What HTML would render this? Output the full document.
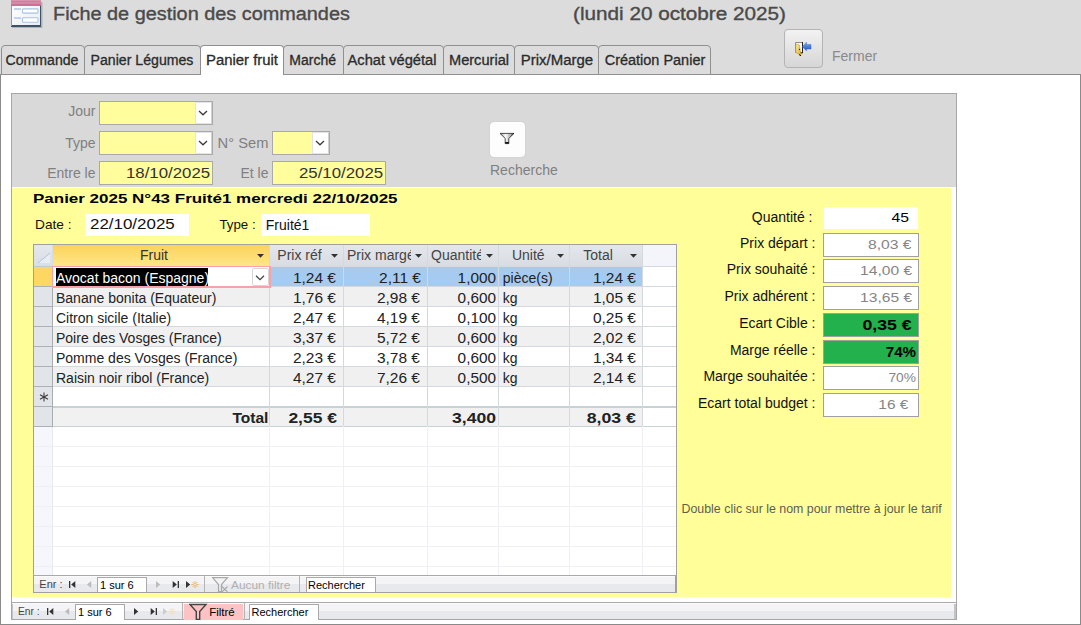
<!DOCTYPE html>
<html><head><meta charset="utf-8"><title>Fiche de gestion des commandes</title>
<style>
html,body{margin:0;padding:0;}
body{width:1081px;height:625px;overflow:hidden;position:relative;font-family:"Liberation Sans", sans-serif;background:#fff;}
</style></head><body>
<div style="position:absolute;left:0px;top:0px;width:1081px;height:74px;background:#dcdcdc;"></div>
<div style="position:absolute;left:0px;top:74px;width:1081px;height:551px;background:#fff;"></div>
<div style="position:absolute;left:0px;top:74px;width:1081px;height:1px;background:#8a8a8a;"></div>
<div style="position:absolute;left:0px;top:74px;width:1px;height:551px;background:#8a8a8a;"></div>
<div style="position:absolute;left:1080px;top:74px;width:1px;height:551px;background:#8a8a8a;"></div>
<div style="position:absolute;left:0px;top:624px;width:1081px;height:1px;background:#8a8a8a;"></div>
<svg style="position:absolute;left:11px;top:0px" width="32" height="29" viewBox="0 0 32 29">
<defs><linearGradient id="ig" x1="0" y1="0" x2="1" y2="1"><stop offset="0" stop-color="#ffffff"/><stop offset="1" stop-color="#e8ecf4"/></linearGradient>
<linearGradient id="pg" x1="0" y1="0" x2="0" y2="1"><stop offset="0" stop-color="#d898b0"/><stop offset="1" stop-color="#d47c9c"/></linearGradient></defs>
<rect x="1" y="2" width="30.5" height="26" fill="#56677a" opacity="0.35"/>
<rect x="0" y="0" width="30" height="27" fill="#3e5368"/>
<rect x="0" y="0" width="1" height="26" fill="#8c9db0"/>
<rect x="1" y="5.5" width="28" height="19.5" fill="url(#ig)"/>
<rect x="0" y="0" width="30" height="5.5" fill="url(#pg)"/>
<rect x="0" y="1" width="30" height="0.8" fill="#c8708f" opacity="0.7"/>
<rect x="0" y="4.6" width="30" height="0.9" fill="#c45c82"/>
<rect x="3" y="8.2" width="7" height="1.6" fill="#b4c8e4"/>
<rect x="3" y="17.3" width="7" height="1.5" fill="#b4c8e4"/>
<rect x="11.5" y="8.9" width="15.5" height="4.2" rx="0.8" fill="#fff" stroke="#aac2e2" stroke-width="1.1"/>
<rect x="11.5" y="17.8" width="15.5" height="4.4" rx="0.8" fill="#fff" stroke="#aac2e2" stroke-width="1.1"/>
</svg>
<div style="position:absolute;left:53px;top:5.05px;font-size:18px;line-height:18px;white-space:nowrap;color:#4a4a4a;-webkit-text-stroke:0.0px currentColor;transform:scaleX(1.103);transform-origin:0 0;-webkit-text-stroke:0.35px #4a4a4a;">Fiche de gestion des commandes</div>
<div style="position:absolute;left:573px;top:4.75px;font-size:18px;line-height:18px;white-space:nowrap;color:#4a4a4a;-webkit-text-stroke:0.0px currentColor;transform:scaleX(1.15);transform-origin:0 0;-webkit-text-stroke:0.35px #4a4a4a;">(lundi 20 octobre 2025)</div>
<div style="position:absolute;left:1px;top:45px;width:82px;height:28px;background:#dcdcdc;border:1px solid #8f8f8f;border-radius:4px 4px 0 0;"></div>
<div style="position:absolute;left:-257.6px;width:600px;text-align:center;top:52.84px;font-size:14px;line-height:14px;white-space:nowrap;color:#2b2b2b;-webkit-text-stroke:0.0px currentColor;transform:scaleX(1.007);transform-origin:50% 0;-webkit-text-stroke:0.3px #2b2b2b;">Commande</div>
<div style="position:absolute;left:84px;top:45px;width:115px;height:28px;background:#dcdcdc;border:1px solid #8f8f8f;border-radius:4px 4px 0 0;"></div>
<div style="position:absolute;left:-157.8px;width:600px;text-align:center;top:52.84px;font-size:14px;line-height:14px;white-space:nowrap;color:#2b2b2b;-webkit-text-stroke:0.0px currentColor;transform:scaleX(1.009);transform-origin:50% 0;-webkit-text-stroke:0.3px #2b2b2b;">Panier Légumes</div>
<div style="position:absolute;left:200px;top:45px;width:82px;height:29px;background:#ffffff;border:1px solid #8f8f8f;border-bottom:none;border-radius:4px 4px 0 0;"></div>
<div style="position:absolute;left:-58.19999999999999px;width:600px;text-align:center;top:52.84px;font-size:14px;line-height:14px;white-space:nowrap;color:#2b2b2b;-webkit-text-stroke:0.0px currentColor;transform:scaleX(1.064);transform-origin:50% 0;-webkit-text-stroke:0.3px #2b2b2b;">Panier fruit</div>
<div style="position:absolute;left:283px;top:45px;width:59px;height:28px;background:#dcdcdc;border:1px solid #8f8f8f;border-radius:4px 4px 0 0;"></div>
<div style="position:absolute;left:12.649999999999977px;width:600px;text-align:center;top:52.84px;font-size:14px;line-height:14px;white-space:nowrap;color:#2b2b2b;-webkit-text-stroke:0.0px currentColor;-webkit-text-stroke:0.3px #2b2b2b;">Marché</div>
<div style="position:absolute;left:343px;top:45px;width:99px;height:28px;background:#dcdcdc;border:1px solid #8f8f8f;border-radius:4px 4px 0 0;"></div>
<div style="position:absolute;left:92.25px;width:600px;text-align:center;top:52.84px;font-size:14px;line-height:14px;white-space:nowrap;color:#2b2b2b;-webkit-text-stroke:0.0px currentColor;transform:scaleX(1.048);transform-origin:50% 0;-webkit-text-stroke:0.3px #2b2b2b;">Achat végétal</div>
<div style="position:absolute;left:443px;top:45px;width:70px;height:28px;background:#dcdcdc;border:1px solid #8f8f8f;border-radius:4px 4px 0 0;"></div>
<div style="position:absolute;left:178.5px;width:600px;text-align:center;top:52.84px;font-size:14px;line-height:14px;white-space:nowrap;color:#2b2b2b;-webkit-text-stroke:0.0px currentColor;transform:scaleX(1.043);transform-origin:50% 0;-webkit-text-stroke:0.3px #2b2b2b;">Mercurial</div>
<div style="position:absolute;left:514px;top:45px;width:83px;height:28px;background:#dcdcdc;border:1px solid #8f8f8f;border-radius:4px 4px 0 0;"></div>
<div style="position:absolute;left:256.85px;width:600px;text-align:center;top:52.84px;font-size:14px;line-height:14px;white-space:nowrap;color:#2b2b2b;-webkit-text-stroke:0.0px currentColor;transform:scaleX(1.069);transform-origin:50% 0;-webkit-text-stroke:0.3px #2b2b2b;">Prix/Marge</div>
<div style="position:absolute;left:598px;top:45px;width:111px;height:28px;background:#dcdcdc;border:1px solid #8f8f8f;border-radius:4px 4px 0 0;"></div>
<div style="position:absolute;left:355.0px;width:600px;text-align:center;top:52.84px;font-size:14px;line-height:14px;white-space:nowrap;color:#2b2b2b;-webkit-text-stroke:0.0px currentColor;transform:scaleX(1.033);transform-origin:50% 0;-webkit-text-stroke:0.3px #2b2b2b;">Création Panier</div>
<div style="position:absolute;left:784px;top:29px;width:37px;height:37px;border:1px solid #b4b4b4;border-radius:4px;background:linear-gradient(#f2f2f2,#d6d6d6);"></div>
<svg style="position:absolute;left:790px;top:38px" width="26" height="20" viewBox="0 0 26 20">
<defs><linearGradient id="ag" x1="0" y1="0" x2="0" y2="1"><stop offset="0" stop-color="#7fb0f8"/><stop offset="1" stop-color="#1d4fc4"/></linearGradient>
<linearGradient id="dg" x1="0" y1="0" x2="1" y2="1"><stop offset="0" stop-color="#fff0a0"/><stop offset="1" stop-color="#e0a820"/></linearGradient></defs>
<path d="M5.5 4.5 L12.5 4.5 L12.5 14.5 L5.5 14.5 Z" fill="#fbfbfb" stroke="#9a8c70" stroke-width="1"/>
<path d="M12.5 4 L12.5 15 L10.5 15" fill="none" stroke="#222" stroke-width="1"/>
<path d="M5.8 6 L9.5 7 L11 17.5 L5.8 14.5 Z" fill="url(#dg)" stroke="#b08a30" stroke-width="0.5"/>
<path d="M9 16.5 L11 17.8" stroke="#111" stroke-width="1"/>
<circle cx="9.4" cy="11.4" r="0.6" fill="#222"/>
<path d="M12.3 8.7 L16.5 4.2 L16.5 6.6 L21 6.6 L21 11 L16.5 11 L16.5 12.8 Z" fill="url(#ag)" stroke="#2a5ac0" stroke-width="0.4"/>
</svg>
<div style="position:absolute;left:832px;top:49.34px;font-size:14px;line-height:14px;white-space:nowrap;color:#8a8a8a;-webkit-text-stroke:0.0px currentColor;">Fermer</div>
<div style="position:absolute;left:11px;top:93px;width:946px;height:95px;background:#d9d9d9;box-sizing:border-box;border:1px solid #a6a6a6;border-bottom:none;"></div>
<div style="position:absolute;left:12px;top:187px;width:944px;height:1px;background:#fff;"></div>
<div style="position:absolute;right:985.5px;text-align:right;top:104.34px;font-size:14px;line-height:14px;white-space:nowrap;color:#808080;-webkit-text-stroke:0.0px currentColor;">Jour</div>
<div style="position:absolute;left:99px;top:101px;width:114px;height:24px;box-sizing:border-box;border:1px solid #a9a9a9;background:#fffd9c;"></div>
<div style="position:absolute;left:195px;top:102px;width:17px;height:22px;background:#fff;border:1px solid #e4e4e4;border-right-color:#d0d0d0;box-sizing:border-box"></div>
<svg style="position:absolute;left:198px;top:110.2px" width="10" height="6" viewBox="0 0 10 6"><path d="M1 1 L5 4.8 L9 1" fill="none" stroke="#3a3a3a" stroke-width="1.25"/></svg>
<div style="position:absolute;right:985.5px;text-align:right;top:135.64px;font-size:14px;line-height:14px;white-space:nowrap;color:#808080;-webkit-text-stroke:0.0px currentColor;">Type</div>
<div style="position:absolute;left:99px;top:131px;width:114px;height:24px;box-sizing:border-box;border:1px solid #a9a9a9;background:#fffd9c;"></div>
<div style="position:absolute;left:195px;top:132px;width:17px;height:22px;background:#fff;border:1px solid #e4e4e4;border-right-color:#d0d0d0;box-sizing:border-box"></div>
<svg style="position:absolute;left:198px;top:140.2px" width="10" height="6" viewBox="0 0 10 6"><path d="M1 1 L5 4.8 L9 1" fill="none" stroke="#3a3a3a" stroke-width="1.25"/></svg>
<div style="position:absolute;right:812.5px;text-align:right;top:135.64px;font-size:14px;line-height:14px;white-space:nowrap;color:#808080;-webkit-text-stroke:0.0px currentColor;transform:scaleX(1.05);transform-origin:100% 0;">N° Sem</div>
<div style="position:absolute;left:272px;top:131px;width:58px;height:24px;box-sizing:border-box;border:1px solid #a9a9a9;background:#fffd9c;"></div>
<div style="position:absolute;left:312px;top:132px;width:17px;height:22px;background:#fff;border:1px solid #e4e4e4;border-right-color:#d0d0d0;box-sizing:border-box"></div>
<svg style="position:absolute;left:315px;top:140.2px" width="10" height="6" viewBox="0 0 10 6"><path d="M1 1 L5 4.8 L9 1" fill="none" stroke="#3a3a3a" stroke-width="1.25"/></svg>
<div style="position:absolute;right:985.5px;text-align:right;top:165.64px;font-size:14px;line-height:14px;white-space:nowrap;color:#808080;-webkit-text-stroke:0.0px currentColor;">Entre le</div>
<div style="position:absolute;left:99px;top:161px;width:114px;height:24px;box-sizing:border-box;border:1px solid #a9a9a9;background:#fffd9c;"></div>
<div style="position:absolute;right:871px;text-align:right;top:165.64px;font-size:14px;line-height:14px;white-space:nowrap;color:#333;-webkit-text-stroke:0.0px currentColor;transform:scaleX(1.2);transform-origin:100% 0;">18/10/2025</div>
<div style="position:absolute;right:812.5px;text-align:right;top:165.64px;font-size:14px;line-height:14px;white-space:nowrap;color:#808080;-webkit-text-stroke:0.0px currentColor;">Et le</div>
<div style="position:absolute;left:272px;top:161px;width:114px;height:24px;box-sizing:border-box;border:1px solid #a9a9a9;background:#fffd9c;"></div>
<div style="position:absolute;right:698px;text-align:right;top:165.64px;font-size:14px;line-height:14px;white-space:nowrap;color:#333;-webkit-text-stroke:0.0px currentColor;transform:scaleX(1.2);transform-origin:100% 0;">25/10/2025</div>
<div style="position:absolute;left:490px;top:122px;width:35px;height:35px;border-radius:4px;background:#fdfdfd;box-shadow:0 0 1px #aaa;"></div>
<svg style="position:absolute;left:499px;top:132px" width="16" height="13" viewBox="0 0 16 13">
<defs><linearGradient id="fg" x1="0" x2="1"><stop offset="0" stop-color="#9a9a9a"/><stop offset="0.4" stop-color="#fafafa"/><stop offset="0.75" stop-color="#b0b0b0"/><stop offset="1" stop-color="#222"/></linearGradient></defs>
<path d="M1 1.4 L15 1.4 L9.8 6.4 L9.8 11.6 L6.2 11.6 L6.2 6.4 Z" fill="url(#fg)" stroke="#1a1a1a" stroke-width="0.75" stroke-linejoin="miter"/>
<path d="M6.2 10 L9.8 10 L9.8 11.6 L6.2 11.6 Z" fill="#111"/>
</svg>
<div style="position:absolute;left:490px;top:163.24px;font-size:14px;line-height:14px;white-space:nowrap;color:#808080;-webkit-text-stroke:0.0px currentColor;">Recherche</div>
<div style="position:absolute;left:11px;top:188px;width:1px;height:432px;background:#a6a6a6;"></div>
<div style="position:absolute;left:956px;top:93px;width:1px;height:527px;background:#a6a6a6;"></div>
<div style="position:absolute;left:12px;top:188px;width:939px;height:409px;background:#fffe99;"></div>
<div style="position:absolute;left:33px;top:191.52px;font-size:13.2px;line-height:13.2px;white-space:nowrap;color:#000;font-weight:bold;transform:scaleX(1.2875);transform-origin:0 0;">Panier 2025 N°43 Fruité1 mercredi 22/10/2025</div>
<div style="position:absolute;left:34.7px;top:217.53px;font-size:13.3px;line-height:13.3px;white-space:nowrap;color:#111;-webkit-text-stroke:0.0px currentColor;transform:scaleX(1.03);transform-origin:0 0;">Date :</div>
<div style="position:absolute;left:85px;top:214px;width:104px;height:22px;background:#fff;"></div>
<div style="position:absolute;left:89.7px;top:218.11px;font-size:13.8px;line-height:13.8px;white-space:nowrap;color:#111;-webkit-text-stroke:0.0px currentColor;transform:scaleX(1.227);transform-origin:0 0;">22/10/2025</div>
<div style="position:absolute;left:219.4px;top:217.53px;font-size:13.3px;line-height:13.3px;white-space:nowrap;color:#111;-webkit-text-stroke:0.0px currentColor;">Type :</div>
<div style="position:absolute;left:261px;top:214px;width:109px;height:22px;background:#fff;"></div>
<div style="position:absolute;left:265.8px;top:217.94px;font-size:14px;line-height:14px;white-space:nowrap;color:#111;-webkit-text-stroke:0.0px currentColor;">Fruité1</div>
<div style="position:absolute;left:33px;top:244px;width:644px;height:349px;background:#fff;box-sizing:border-box;border:1px solid #a0a0a0;"></div>
<div style="position:absolute;left:34px;top:245px;width:18px;height:21px;background:linear-gradient(#e4e7ec,#dadee5);"></div>
<div style="position:absolute;left:53px;top:245px;width:216px;height:21px;background:linear-gradient(#fcd35a,#fde68a);"></div>
<div style="position:absolute;left:269px;top:245px;width:373px;height:21px;background:linear-gradient(#e3e6eb,#d9dde3);"></div>
<div style="position:absolute;left:642px;top:245px;width:34px;height:21px;background:#f3f5fa;"></div>
<svg style="position:absolute;left:37px;top:251.5px" width="14" height="12" viewBox="0 0 14 12"><path d="M1 11 L13 1 L13 11 Z" fill="#e9ecf1"/><path d="M1 11 L13 1" stroke="#a8c4e8" stroke-width="1"/></svg>
<div style="position:absolute;left:34px;top:266px;width:18px;height:160px;background:#e1e4e9;"></div>
<div style="position:absolute;left:34px;top:426px;width:18px;height:149px;background:#f5f7fc;"></div>
<div style="position:absolute;left:34px;top:267px;width:18px;height:19px;background:#fdd663;"></div>
<div style="position:absolute;left:53px;top:267px;width:589px;height:19px;background:#ffffff;"></div>
<div style="position:absolute;left:53px;top:287px;width:589px;height:19px;background:#f0f0f0;"></div>
<div style="position:absolute;left:53px;top:307px;width:589px;height:19px;background:#ffffff;"></div>
<div style="position:absolute;left:53px;top:327px;width:589px;height:19px;background:#f0f0f0;"></div>
<div style="position:absolute;left:53px;top:347px;width:589px;height:19px;background:#ffffff;"></div>
<div style="position:absolute;left:53px;top:367px;width:589px;height:19px;background:#f0f0f0;"></div>
<div style="position:absolute;left:53px;top:387px;width:589px;height:19px;background:#ffffff;"></div>
<div style="position:absolute;left:53px;top:407px;width:589px;height:19px;background:#f1f1f1;"></div>
<div style="position:absolute;left:269px;top:267px;width:373px;height:19px;background:#a6cbf0;"></div>
<div style="position:absolute;left:52px;top:266px;width:624px;height:1px;background:#d3d9df;"></div>
<div style="position:absolute;left:52px;top:286px;width:624px;height:1px;background:#d3d9df;"></div>
<div style="position:absolute;left:52px;top:306px;width:624px;height:1px;background:#d3d9df;"></div>
<div style="position:absolute;left:52px;top:326px;width:624px;height:1px;background:#d3d9df;"></div>
<div style="position:absolute;left:52px;top:346px;width:624px;height:1px;background:#d3d9df;"></div>
<div style="position:absolute;left:52px;top:366px;width:624px;height:1px;background:#d3d9df;"></div>
<div style="position:absolute;left:52px;top:386px;width:624px;height:1px;background:#d3d9df;"></div>
<div style="position:absolute;left:52px;top:406px;width:624px;height:1px;background:#d3d9df;"></div>
<div style="position:absolute;left:52px;top:426px;width:624px;height:1px;background:#d3d9df;"></div>
<div style="position:absolute;left:34px;top:266px;width:18px;height:1px;background:#c4c8ce;"></div>
<div style="position:absolute;left:34px;top:286px;width:18px;height:1px;background:#adb1b6;"></div>
<div style="position:absolute;left:34px;top:306px;width:18px;height:1px;background:#adb1b6;"></div>
<div style="position:absolute;left:34px;top:326px;width:18px;height:1px;background:#adb1b6;"></div>
<div style="position:absolute;left:34px;top:346px;width:18px;height:1px;background:#adb1b6;"></div>
<div style="position:absolute;left:34px;top:366px;width:18px;height:1px;background:#adb1b6;"></div>
<div style="position:absolute;left:34px;top:386px;width:18px;height:1px;background:#adb1b6;"></div>
<div style="position:absolute;left:34px;top:406px;width:18px;height:1px;background:#adb1b6;"></div>
<div style="position:absolute;left:34px;top:426px;width:18px;height:1px;background:#adb1b6;"></div>
<div style="position:absolute;left:52px;top:406px;width:624px;height:2px;background:#c8d2d4;"></div>
<div style="position:absolute;left:52px;top:426px;width:624px;height:1px;background:#c8d2d4;"></div>
<div style="position:absolute;left:34px;top:446px;width:642px;height:1px;background:#eef0f3;"></div>
<div style="position:absolute;left:34px;top:466px;width:642px;height:1px;background:#eef0f3;"></div>
<div style="position:absolute;left:34px;top:486px;width:642px;height:1px;background:#eef0f3;"></div>
<div style="position:absolute;left:34px;top:506px;width:642px;height:1px;background:#eef0f3;"></div>
<div style="position:absolute;left:34px;top:526px;width:642px;height:1px;background:#eef0f3;"></div>
<div style="position:absolute;left:34px;top:546px;width:642px;height:1px;background:#eef0f3;"></div>
<div style="position:absolute;left:34px;top:566px;width:642px;height:1px;background:#eef0f3;"></div>
<div style="position:absolute;left:52px;top:245px;width:1px;height:21px;background:#d9dde3;"></div>
<div style="position:absolute;left:52px;top:286px;width:1px;height:141px;background:#a9adb2;"></div>
<div style="position:absolute;left:52px;top:427px;width:1px;height:148px;background:#e6e9ee;"></div>
<div style="position:absolute;left:269px;top:245px;width:1px;height:181px;background:#d3d9df;"></div>
<div style="position:absolute;left:269px;top:426px;width:1px;height:149px;background:#eef0f3;"></div>
<div style="position:absolute;left:343px;top:245px;width:1px;height:181px;background:#d3d9df;"></div>
<div style="position:absolute;left:343px;top:426px;width:1px;height:149px;background:#eef0f3;"></div>
<div style="position:absolute;left:427px;top:245px;width:1px;height:181px;background:#d3d9df;"></div>
<div style="position:absolute;left:427px;top:426px;width:1px;height:149px;background:#eef0f3;"></div>
<div style="position:absolute;left:498px;top:245px;width:1px;height:181px;background:#d3d9df;"></div>
<div style="position:absolute;left:498px;top:426px;width:1px;height:149px;background:#eef0f3;"></div>
<div style="position:absolute;left:569px;top:245px;width:1px;height:181px;background:#d3d9df;"></div>
<div style="position:absolute;left:569px;top:426px;width:1px;height:149px;background:#eef0f3;"></div>
<div style="position:absolute;left:642px;top:245px;width:1px;height:181px;background:#d3d9df;"></div>
<div style="position:absolute;left:642px;top:426px;width:1px;height:149px;background:#eef0f3;"></div>
<div style="position:absolute;left:-146px;width:600px;text-align:center;top:247.74px;font-size:14px;line-height:14px;white-space:nowrap;color:#333;-webkit-text-stroke:0.0px currentColor;">Fruit</div>
<div style="position:absolute;left:277.3px;top:247.74px;font-size:14px;line-height:14px;white-space:nowrap;color:#444;-webkit-text-stroke:0.0px currentColor;">Prix réf</div>
<div style="position:absolute;left:347px;top:245px;width:64px;height:21px;overflow:hidden;"><div style="position:absolute;left:0;top:2.74px; font-size:14px;line-height:14px;white-space:nowrap;color:#444">Prix margé</div></div>
<div style="position:absolute;left:431px;top:245px;width:50px;height:21px;overflow:hidden;"><div style="position:absolute;left:0;top:2.74px; font-size:14px;line-height:14px;white-space:nowrap;color:#444">Quantité</div></div>
<div style="position:absolute;left:228.29999999999995px;width:600px;text-align:center;top:247.74px;font-size:14px;line-height:14px;white-space:nowrap;color:#444;-webkit-text-stroke:0.0px currentColor;">Unité</div>
<div style="position:absolute;left:298px;width:600px;text-align:center;top:247.74px;font-size:14px;line-height:14px;white-space:nowrap;color:#444;-webkit-text-stroke:0.0px currentColor;">Total</div>
<svg style="position:absolute;left:256.5px;top:254px" width="7" height="4" viewBox="0 0 7 4"><path d="M0 0 L7 0 L3.5 3.8 Z" fill="#333"/></svg>
<svg style="position:absolute;left:330.5px;top:254px" width="7" height="4" viewBox="0 0 7 4"><path d="M0 0 L7 0 L3.5 3.8 Z" fill="#333"/></svg>
<svg style="position:absolute;left:414.5px;top:254px" width="7" height="4" viewBox="0 0 7 4"><path d="M0 0 L7 0 L3.5 3.8 Z" fill="#333"/></svg>
<svg style="position:absolute;left:485.5px;top:254px" width="7" height="4" viewBox="0 0 7 4"><path d="M0 0 L7 0 L3.5 3.8 Z" fill="#333"/></svg>
<svg style="position:absolute;left:556.5px;top:254px" width="7" height="4" viewBox="0 0 7 4"><path d="M0 0 L7 0 L3.5 3.8 Z" fill="#333"/></svg>
<svg style="position:absolute;left:629.5px;top:254px" width="7" height="4" viewBox="0 0 7 4"><path d="M0 0 L7 0 L3.5 3.8 Z" fill="#333"/></svg>
<div style="position:absolute;left:52px;top:266px;width:219px;height:22px;box-sizing:border-box;border:2px solid #f7a2a8;border-left-width:1.5px;border-top-width:1.5px;background:#fff;"></div>
<div style="position:absolute;left:56px;top:268px;width:152px;height:18px;background:#000;"></div>
<div style="position:absolute;left:56px;top:270.74px;font-size:14px;line-height:14px;white-space:nowrap;color:#fff;-webkit-text-stroke:0.0px currentColor;">Avocat bacon (Espagne)</div>
<div style="position:absolute;left:252px;top:268px;width:17px;height:18px;box-sizing:border-box;border:1px solid #d6d6d6;border-radius:2px;background:#fff;"></div>
<svg style="position:absolute;left:255px;top:275px" width="10" height="6" viewBox="0 0 10 6"><path d="M1 0.8 L5 4.6 L9 0.8" fill="none" stroke="#444" stroke-width="1.3"/></svg>
<div style="position:absolute;right:745px;text-align:right;top:270.74px;font-size:14px;line-height:14px;white-space:nowrap;color:#222;-webkit-text-stroke:0.0px currentColor;transform:scaleX(1.105);transform-origin:100% 0;">1,24 €</div>
<div style="position:absolute;right:660.6px;text-align:right;top:270.74px;font-size:14px;line-height:14px;white-space:nowrap;color:#222;-webkit-text-stroke:0.0px currentColor;transform:scaleX(1.105);transform-origin:100% 0;">2,11 €</div>
<div style="position:absolute;right:585px;text-align:right;top:270.74px;font-size:14px;line-height:14px;white-space:nowrap;color:#222;-webkit-text-stroke:0.0px currentColor;transform:scaleX(1.097);transform-origin:100% 0;">1,000</div>
<div style="position:absolute;left:502.8px;top:270.74px;font-size:14px;line-height:14px;white-space:nowrap;color:#222;-webkit-text-stroke:0.0px currentColor;">pièce(s)</div>
<div style="position:absolute;right:445.29999999999995px;text-align:right;top:270.74px;font-size:14px;line-height:14px;white-space:nowrap;color:#222;-webkit-text-stroke:0.0px currentColor;transform:scaleX(1.105);transform-origin:100% 0;">1,24 €</div>
<div style="position:absolute;left:56px;top:290.74px;font-size:14px;line-height:14px;white-space:nowrap;color:#222;-webkit-text-stroke:0.0px currentColor;">Banane bonita (Equateur)</div>
<div style="position:absolute;right:745px;text-align:right;top:290.74px;font-size:14px;line-height:14px;white-space:nowrap;color:#222;-webkit-text-stroke:0.0px currentColor;transform:scaleX(1.105);transform-origin:100% 0;">1,76 €</div>
<div style="position:absolute;right:660.6px;text-align:right;top:290.74px;font-size:14px;line-height:14px;white-space:nowrap;color:#222;-webkit-text-stroke:0.0px currentColor;transform:scaleX(1.105);transform-origin:100% 0;">2,98 €</div>
<div style="position:absolute;right:585px;text-align:right;top:290.74px;font-size:14px;line-height:14px;white-space:nowrap;color:#222;-webkit-text-stroke:0.0px currentColor;transform:scaleX(1.097);transform-origin:100% 0;">0,600</div>
<div style="position:absolute;left:502.8px;top:290.74px;font-size:14px;line-height:14px;white-space:nowrap;color:#222;-webkit-text-stroke:0.0px currentColor;">kg</div>
<div style="position:absolute;right:445.29999999999995px;text-align:right;top:290.74px;font-size:14px;line-height:14px;white-space:nowrap;color:#222;-webkit-text-stroke:0.0px currentColor;transform:scaleX(1.105);transform-origin:100% 0;">1,05 €</div>
<div style="position:absolute;left:56px;top:310.74px;font-size:14px;line-height:14px;white-space:nowrap;color:#222;-webkit-text-stroke:0.0px currentColor;">Citron sicile (Italie)</div>
<div style="position:absolute;right:745px;text-align:right;top:310.74px;font-size:14px;line-height:14px;white-space:nowrap;color:#222;-webkit-text-stroke:0.0px currentColor;transform:scaleX(1.105);transform-origin:100% 0;">2,47 €</div>
<div style="position:absolute;right:660.6px;text-align:right;top:310.74px;font-size:14px;line-height:14px;white-space:nowrap;color:#222;-webkit-text-stroke:0.0px currentColor;transform:scaleX(1.105);transform-origin:100% 0;">4,19 €</div>
<div style="position:absolute;right:585px;text-align:right;top:310.74px;font-size:14px;line-height:14px;white-space:nowrap;color:#222;-webkit-text-stroke:0.0px currentColor;transform:scaleX(1.097);transform-origin:100% 0;">0,100</div>
<div style="position:absolute;left:502.8px;top:310.74px;font-size:14px;line-height:14px;white-space:nowrap;color:#222;-webkit-text-stroke:0.0px currentColor;">kg</div>
<div style="position:absolute;right:445.29999999999995px;text-align:right;top:310.74px;font-size:14px;line-height:14px;white-space:nowrap;color:#222;-webkit-text-stroke:0.0px currentColor;transform:scaleX(1.105);transform-origin:100% 0;">0,25 €</div>
<div style="position:absolute;left:56px;top:330.74px;font-size:14px;line-height:14px;white-space:nowrap;color:#222;-webkit-text-stroke:0.0px currentColor;">Poire des Vosges (France)</div>
<div style="position:absolute;right:745px;text-align:right;top:330.74px;font-size:14px;line-height:14px;white-space:nowrap;color:#222;-webkit-text-stroke:0.0px currentColor;transform:scaleX(1.105);transform-origin:100% 0;">3,37 €</div>
<div style="position:absolute;right:660.6px;text-align:right;top:330.74px;font-size:14px;line-height:14px;white-space:nowrap;color:#222;-webkit-text-stroke:0.0px currentColor;transform:scaleX(1.105);transform-origin:100% 0;">5,72 €</div>
<div style="position:absolute;right:585px;text-align:right;top:330.74px;font-size:14px;line-height:14px;white-space:nowrap;color:#222;-webkit-text-stroke:0.0px currentColor;transform:scaleX(1.097);transform-origin:100% 0;">0,600</div>
<div style="position:absolute;left:502.8px;top:330.74px;font-size:14px;line-height:14px;white-space:nowrap;color:#222;-webkit-text-stroke:0.0px currentColor;">kg</div>
<div style="position:absolute;right:445.29999999999995px;text-align:right;top:330.74px;font-size:14px;line-height:14px;white-space:nowrap;color:#222;-webkit-text-stroke:0.0px currentColor;transform:scaleX(1.105);transform-origin:100% 0;">2,02 €</div>
<div style="position:absolute;left:56px;top:350.74px;font-size:14px;line-height:14px;white-space:nowrap;color:#222;-webkit-text-stroke:0.0px currentColor;">Pomme des Vosges (France)</div>
<div style="position:absolute;right:745px;text-align:right;top:350.74px;font-size:14px;line-height:14px;white-space:nowrap;color:#222;-webkit-text-stroke:0.0px currentColor;transform:scaleX(1.105);transform-origin:100% 0;">2,23 €</div>
<div style="position:absolute;right:660.6px;text-align:right;top:350.74px;font-size:14px;line-height:14px;white-space:nowrap;color:#222;-webkit-text-stroke:0.0px currentColor;transform:scaleX(1.105);transform-origin:100% 0;">3,78 €</div>
<div style="position:absolute;right:585px;text-align:right;top:350.74px;font-size:14px;line-height:14px;white-space:nowrap;color:#222;-webkit-text-stroke:0.0px currentColor;transform:scaleX(1.097);transform-origin:100% 0;">0,600</div>
<div style="position:absolute;left:502.8px;top:350.74px;font-size:14px;line-height:14px;white-space:nowrap;color:#222;-webkit-text-stroke:0.0px currentColor;">kg</div>
<div style="position:absolute;right:445.29999999999995px;text-align:right;top:350.74px;font-size:14px;line-height:14px;white-space:nowrap;color:#222;-webkit-text-stroke:0.0px currentColor;transform:scaleX(1.105);transform-origin:100% 0;">1,34 €</div>
<div style="position:absolute;left:56px;top:370.74px;font-size:14px;line-height:14px;white-space:nowrap;color:#222;-webkit-text-stroke:0.0px currentColor;">Raisin noir ribol (France)</div>
<div style="position:absolute;right:745px;text-align:right;top:370.74px;font-size:14px;line-height:14px;white-space:nowrap;color:#222;-webkit-text-stroke:0.0px currentColor;transform:scaleX(1.105);transform-origin:100% 0;">4,27 €</div>
<div style="position:absolute;right:660.6px;text-align:right;top:370.74px;font-size:14px;line-height:14px;white-space:nowrap;color:#222;-webkit-text-stroke:0.0px currentColor;transform:scaleX(1.105);transform-origin:100% 0;">7,26 €</div>
<div style="position:absolute;right:585px;text-align:right;top:370.74px;font-size:14px;line-height:14px;white-space:nowrap;color:#222;-webkit-text-stroke:0.0px currentColor;transform:scaleX(1.097);transform-origin:100% 0;">0,500</div>
<div style="position:absolute;left:502.8px;top:370.74px;font-size:14px;line-height:14px;white-space:nowrap;color:#222;-webkit-text-stroke:0.0px currentColor;">kg</div>
<div style="position:absolute;right:445.29999999999995px;text-align:right;top:370.74px;font-size:14px;line-height:14px;white-space:nowrap;color:#222;-webkit-text-stroke:0.0px currentColor;transform:scaleX(1.105);transform-origin:100% 0;">2,14 €</div>
<svg style="position:absolute;left:39px;top:392px" width="10" height="10" viewBox="0 0 10 10"><g stroke="#3a3a3a" stroke-width="1.05"><path d="M5 0.5 L5 9.5"/><path d="M1 2.75 L9 7.25"/><path d="M1 7.25 L9 2.75"/></g></svg>
<div style="position:absolute;right:813px;text-align:right;top:410.74px;font-size:14px;line-height:14px;white-space:nowrap;color:#222;font-weight:bold;transform:scaleX(1.11);transform-origin:100% 0;">Total</div>
<div style="position:absolute;right:744.5px;text-align:right;top:410.74px;font-size:14px;line-height:14px;white-space:nowrap;color:#222;font-weight:bold;transform:scaleX(1.247);transform-origin:100% 0;">2,55 €</div>
<div style="position:absolute;right:584.8px;text-align:right;top:410.74px;font-size:14px;line-height:14px;white-space:nowrap;color:#222;font-weight:bold;transform:scaleX(1.254);transform-origin:100% 0;">3,400</div>
<div style="position:absolute;right:445px;text-align:right;top:410.74px;font-size:14px;line-height:14px;white-space:nowrap;color:#222;font-weight:bold;transform:scaleX(1.265);transform-origin:100% 0;">8,03 €</div>
<div style="position:absolute;left:34px;top:575px;width:642px;height:17px;background:linear-gradient(#f4f4f6 0%,#f4f4f6 50%,#e8e9ed 50%,#e8e9ed 100%);border-top:1px solid #a9a9a9;box-sizing:border-box;"></div>
<div style="position:absolute;left:34px;top:576px;width:642px;height:1px;background:#fbfbfc;"></div>
<div style="position:absolute;left:39.3px;top:579.28px;font-size:11px;line-height:11px;white-space:nowrap;color:#444;-webkit-text-stroke:0.0px currentColor;">Enr :</div>
<svg style="position:absolute;left:69px;top:581px" width="7" height="7" viewBox="0 0 7 7"><rect x="0" y="0" width="1.3" height="7" fill="#333"/><path d="M6.3 0 L2.2 3.5 L6.3 7 Z" fill="#333"/></svg>
<svg style="position:absolute;left:87px;top:581px" width="5" height="7" viewBox="0 0 5 7"><path d="M4.2 0 L0 3.5 L4.2 7 Z" fill="#bbb"/></svg>
<div style="position:absolute;left:97px;top:577px;width:50px;height:15px;background:#fff;border:1px solid #a9a9a9;border-bottom:none;box-sizing:border-box;"></div>
<div style="position:absolute;left:100px;top:579.58px;font-size:11px;line-height:11px;white-space:nowrap;color:#000;-webkit-text-stroke:0.0px currentColor;">1 sur 6</div>
<svg style="position:absolute;left:156px;top:581px" width="5" height="7" viewBox="0 0 5 7"><path d="M0 0 L4.2 3.5 L0 7 Z" fill="#bbb"/></svg>
<svg style="position:absolute;left:172px;top:581px" width="7" height="7" viewBox="0 0 7 7"><rect x="5.7" y="0" width="1.3" height="7" fill="#333"/><path d="M0.7 0 L4.8 3.5 L0.7 7 Z" fill="#333"/></svg>
<svg style="position:absolute;left:186px;top:581px" width="13" height="8" viewBox="0 0 13 8"><path d="M0 0 L4.2 3.5 L0 7 Z" fill="#333"/><path d="M11.00 3.50 L12.60 3.50 M10.41 4.91 L11.55 6.05 M9.00 5.50 L9.00 7.10 M7.59 4.91 L6.45 6.05 M7.00 3.50 L5.40 3.50 M7.59 2.09 L6.45 0.95 M9.00 1.50 L9.00 -0.10 M10.41 2.09 L11.55 0.95" stroke="#f0b050" stroke-width="0.9" fill="none"/><circle cx="9" cy="3.5" r="1.4" fill="none" stroke="#f0b050" stroke-width="0.9"/></svg>
<div style="position:absolute;left:204px;top:576px;width:1px;height:16px;background:#b4b4b4;"></div>
<svg style="position:absolute;left:212px;top:577px" width="17" height="15" viewBox="0 0 17 15"><path d="M0.7 0.7 L15.5 0.7 L9.5 7.5 L9.5 14.5 L6.5 14.5 L6.5 7.5 Z" fill="none" stroke="#aaa" stroke-width="1.2"/><path d="M10 9.5 L15.5 15 M15.5 9.5 L10 15" stroke="#aaa" stroke-width="1.1"/></svg>
<div style="position:absolute;left:231px;top:579.58px;font-size:11px;line-height:11px;white-space:nowrap;color:#b0b0b0;-webkit-text-stroke:0.0px currentColor;transform:scaleX(1.08);transform-origin:0 0;">Aucun filtre</div>
<div style="position:absolute;left:299px;top:576px;width:1px;height:16px;background:#b4b4b4;"></div>
<div style="position:absolute;left:306px;top:577px;width:70px;height:15px;background:#fff;border:1px solid #a9a9a9;border-bottom:none;box-sizing:border-box;"></div>
<div style="position:absolute;left:308px;top:579.58px;font-size:11px;line-height:11px;white-space:nowrap;color:#000;-webkit-text-stroke:0.0px currentColor;">Rechercher</div>
<div style="position:absolute;left:675px;top:575px;width:1px;height:17px;background:#a0a0a0;"></div>
<div style="position:absolute;right:268.5px;text-align:right;top:209.74px;font-size:14px;line-height:14px;white-space:nowrap;color:#111;-webkit-text-stroke:0.0px currentColor;">Quantité :</div>
<div style="position:absolute;right:265.5px;text-align:right;top:235.84px;font-size:14px;line-height:14px;white-space:nowrap;color:#111;-webkit-text-stroke:0.0px currentColor;">Prix départ :</div>
<div style="position:absolute;right:265.5px;text-align:right;top:262.34px;font-size:14px;line-height:14px;white-space:nowrap;color:#111;-webkit-text-stroke:0.0px currentColor;">Prix souhaité :</div>
<div style="position:absolute;right:265.5px;text-align:right;top:288.84px;font-size:14px;line-height:14px;white-space:nowrap;color:#111;-webkit-text-stroke:0.0px currentColor;">Prix adhérent :</div>
<div style="position:absolute;right:265.5px;text-align:right;top:315.84px;font-size:14px;line-height:14px;white-space:nowrap;color:#111;-webkit-text-stroke:0.0px currentColor;">Ecart Cible :</div>
<div style="position:absolute;right:265.5px;text-align:right;top:342.84px;font-size:14px;line-height:14px;white-space:nowrap;color:#111;-webkit-text-stroke:0.0px currentColor;">Marge réelle :</div>
<div style="position:absolute;right:265.5px;text-align:right;top:368.84px;font-size:14px;line-height:14px;white-space:nowrap;color:#111;-webkit-text-stroke:0.0px currentColor;">Marge souhaitée :</div>
<div style="position:absolute;right:265.5px;text-align:right;top:395.84px;font-size:14px;line-height:14px;white-space:nowrap;color:#111;-webkit-text-stroke:0.0px currentColor;">Ecart total budget :</div>
<div style="position:absolute;left:824px;top:207px;width:94px;height:22px;background:#fff;"></div>
<div style="position:absolute;right:171.60000000000002px;text-align:right;top:211.47px;font-size:13.5px;line-height:13.5px;white-space:nowrap;color:#000;-webkit-text-stroke:0.0px currentColor;transform:scaleX(1.16);transform-origin:100% 0;">45</div>
<div style="position:absolute;left:823px;top:233px;width:96px;height:24px;background:#fff;box-sizing:border-box;border:1px solid #a0a0a0;"></div>
<div style="position:absolute;right:169.20000000000005px;text-align:right;top:237.87px;font-size:13.5px;line-height:13.5px;white-space:nowrap;color:#858585;-webkit-text-stroke:0.0px currentColor;transform:scaleX(1.16);transform-origin:100% 0;">8,03 €</div>
<div style="position:absolute;left:823px;top:259px;width:96px;height:24px;background:#fff;box-sizing:border-box;border:1px solid #a0a0a0;"></div>
<div style="position:absolute;right:169.20000000000005px;text-align:right;top:263.87px;font-size:13.5px;line-height:13.5px;white-space:nowrap;color:#858585;-webkit-text-stroke:0.0px currentColor;transform:scaleX(1.153);transform-origin:100% 0;">14,00 €</div>
<div style="position:absolute;left:823px;top:286px;width:96px;height:24px;background:#fff;box-sizing:border-box;border:1px solid #a0a0a0;"></div>
<div style="position:absolute;right:169.20000000000005px;text-align:right;top:290.87px;font-size:13.5px;line-height:13.5px;white-space:nowrap;color:#858585;-webkit-text-stroke:0.0px currentColor;transform:scaleX(1.153);transform-origin:100% 0;">13,65 €</div>
<div style="position:absolute;left:823px;top:313px;width:96px;height:24px;background:#22b14c;box-sizing:border-box;border:1px solid #a0a0a0;"></div>
<div style="position:absolute;right:169px;text-align:right;top:316.69px;font-size:15px;line-height:15px;white-space:nowrap;color:#000;font-weight:bold;transform:scaleX(1.18);transform-origin:100% 0;">0,35 €</div>
<div style="position:absolute;left:823px;top:340px;width:96px;height:24px;background:#22b14c;box-sizing:border-box;border:1px solid #a0a0a0;"></div>
<div style="position:absolute;right:164.5px;text-align:right;top:343.69px;font-size:15px;line-height:15px;white-space:nowrap;color:#000;font-weight:bold;transform:scaleX(1.01);transform-origin:100% 0;">74%</div>
<div style="position:absolute;left:823px;top:366px;width:96px;height:24px;background:#fff;box-sizing:border-box;border:1px solid #a0a0a0;"></div>
<div style="position:absolute;right:164.5px;text-align:right;top:370.87px;font-size:13.5px;line-height:13.5px;white-space:nowrap;color:#858585;-webkit-text-stroke:0.0px currentColor;transform:scaleX(1.02);transform-origin:100% 0;">70%</div>
<div style="position:absolute;left:823px;top:393px;width:96px;height:24px;background:#fff;box-sizing:border-box;border:1px solid #a0a0a0;"></div>
<div style="position:absolute;right:173px;text-align:right;top:397.87px;font-size:13.5px;line-height:13.5px;white-space:nowrap;color:#858585;-webkit-text-stroke:0.0px currentColor;transform:scaleX(1.14);transform-origin:100% 0;">16 €</div>
<div style="position:absolute;left:681.5px;top:502.90px;font-size:12.4px;line-height:12.4px;white-space:nowrap;color:#5e5e4e;-webkit-text-stroke:0.0px currentColor;">Double clic sur le nom pour mettre à jour le tarif</div>
<div style="position:absolute;left:12px;top:602px;width:944px;height:18px;background:linear-gradient(#f4f4f6 0%,#f4f4f6 50%,#e8e9ed 50%,#e8e9ed 100%);border-top:1px solid #a9a9a9;border-bottom:1px solid #a6a6a6;box-sizing:border-box;"></div>
<div style="position:absolute;left:954px;top:603px;width:2px;height:16px;background:#c4c4c8;"></div>
<div style="position:absolute;left:12px;top:603px;width:1px;height:16px;background:#c4c4c8;"></div>
<div style="position:absolute;left:12px;top:603px;width:944px;height:1px;background:#fbfbfc;"></div>
<div style="position:absolute;left:17.9px;top:606.38px;font-size:11px;line-height:11px;white-space:nowrap;color:#444;-webkit-text-stroke:0.0px currentColor;transform:scaleX(0.93);transform-origin:0 0;">Enr :</div>
<svg style="position:absolute;left:47px;top:608px" width="7" height="7" viewBox="0 0 7 7"><rect x="0" y="0" width="1.3" height="7" fill="#333"/><path d="M6.3 0 L2.2 3.5 L6.3 7 Z" fill="#333"/></svg>
<svg style="position:absolute;left:65px;top:608px" width="5" height="7" viewBox="0 0 5 7"><path d="M4.2 0 L0 3.5 L4.2 7 Z" fill="#bbb"/></svg>
<div style="position:absolute;left:75px;top:604px;width:50px;height:16px;background:#fff;border:1px solid #a9a9a9;border-bottom:none;box-sizing:border-box;"></div>
<div style="position:absolute;left:78px;top:606.58px;font-size:11px;line-height:11px;white-space:nowrap;color:#000;-webkit-text-stroke:0.0px currentColor;">1 sur 6</div>
<svg style="position:absolute;left:134px;top:608px" width="5" height="7" viewBox="0 0 5 7"><path d="M0 0 L4.2 3.5 L0 7 Z" fill="#333"/></svg>
<svg style="position:absolute;left:150px;top:608px" width="7" height="7" viewBox="0 0 7 7"><rect x="5.7" y="0" width="1.3" height="7" fill="#333"/><path d="M0.7 0 L4.8 3.5 L0.7 7 Z" fill="#333"/></svg>
<svg style="position:absolute;left:163px;top:608px" width="13" height="8" viewBox="0 0 13 8"><path d="M0 0 L4.2 3.5 L0 7 Z" fill="#ccc"/><path d="M11.00 3.50 L12.60 3.50 M10.41 4.91 L11.55 6.05 M9.00 5.50 L9.00 7.10 M7.59 4.91 L6.45 6.05 M7.00 3.50 L5.40 3.50 M7.59 2.09 L6.45 0.95 M9.00 1.50 L9.00 -0.10 M10.41 2.09 L11.55 0.95" stroke="#f3dcb8" stroke-width="0.9" fill="none"/><circle cx="9" cy="3.5" r="1.4" fill="none" stroke="#f3dcb8" stroke-width="0.9"/></svg>
<div style="position:absolute;left:182px;top:603px;width:1px;height:17px;background:#b4b4b4;"></div>
<div style="position:absolute;left:184px;top:604px;width:59px;height:16px;background:#fcc2c4;"></div>
<svg style="position:absolute;left:189px;top:603px" width="19" height="17" viewBox="0 0 19 17"><path d="M1 1.5 L17 1.5 L10.7 8.5 L10.7 16.5 L7.3 16.5 L7.3 8.5 Z" fill="none" stroke="#444" stroke-width="1.4"/></svg>
<div style="position:absolute;left:209.2px;top:606.86px;font-size:11.5px;line-height:11.5px;white-space:nowrap;color:#000;-webkit-text-stroke:0.0px currentColor;">Filtré</div>
<div style="position:absolute;left:244px;top:603px;width:1px;height:17px;background:#b4b4b4;"></div>
<div style="position:absolute;left:249px;top:604px;width:70px;height:16px;background:#fff;border:1px solid #a9a9a9;border-bottom:none;box-sizing:border-box;"></div>
<div style="position:absolute;left:251.5px;top:606.58px;font-size:11px;line-height:11px;white-space:nowrap;color:#000;-webkit-text-stroke:0.0px currentColor;">Rechercher</div>
</body></html>
